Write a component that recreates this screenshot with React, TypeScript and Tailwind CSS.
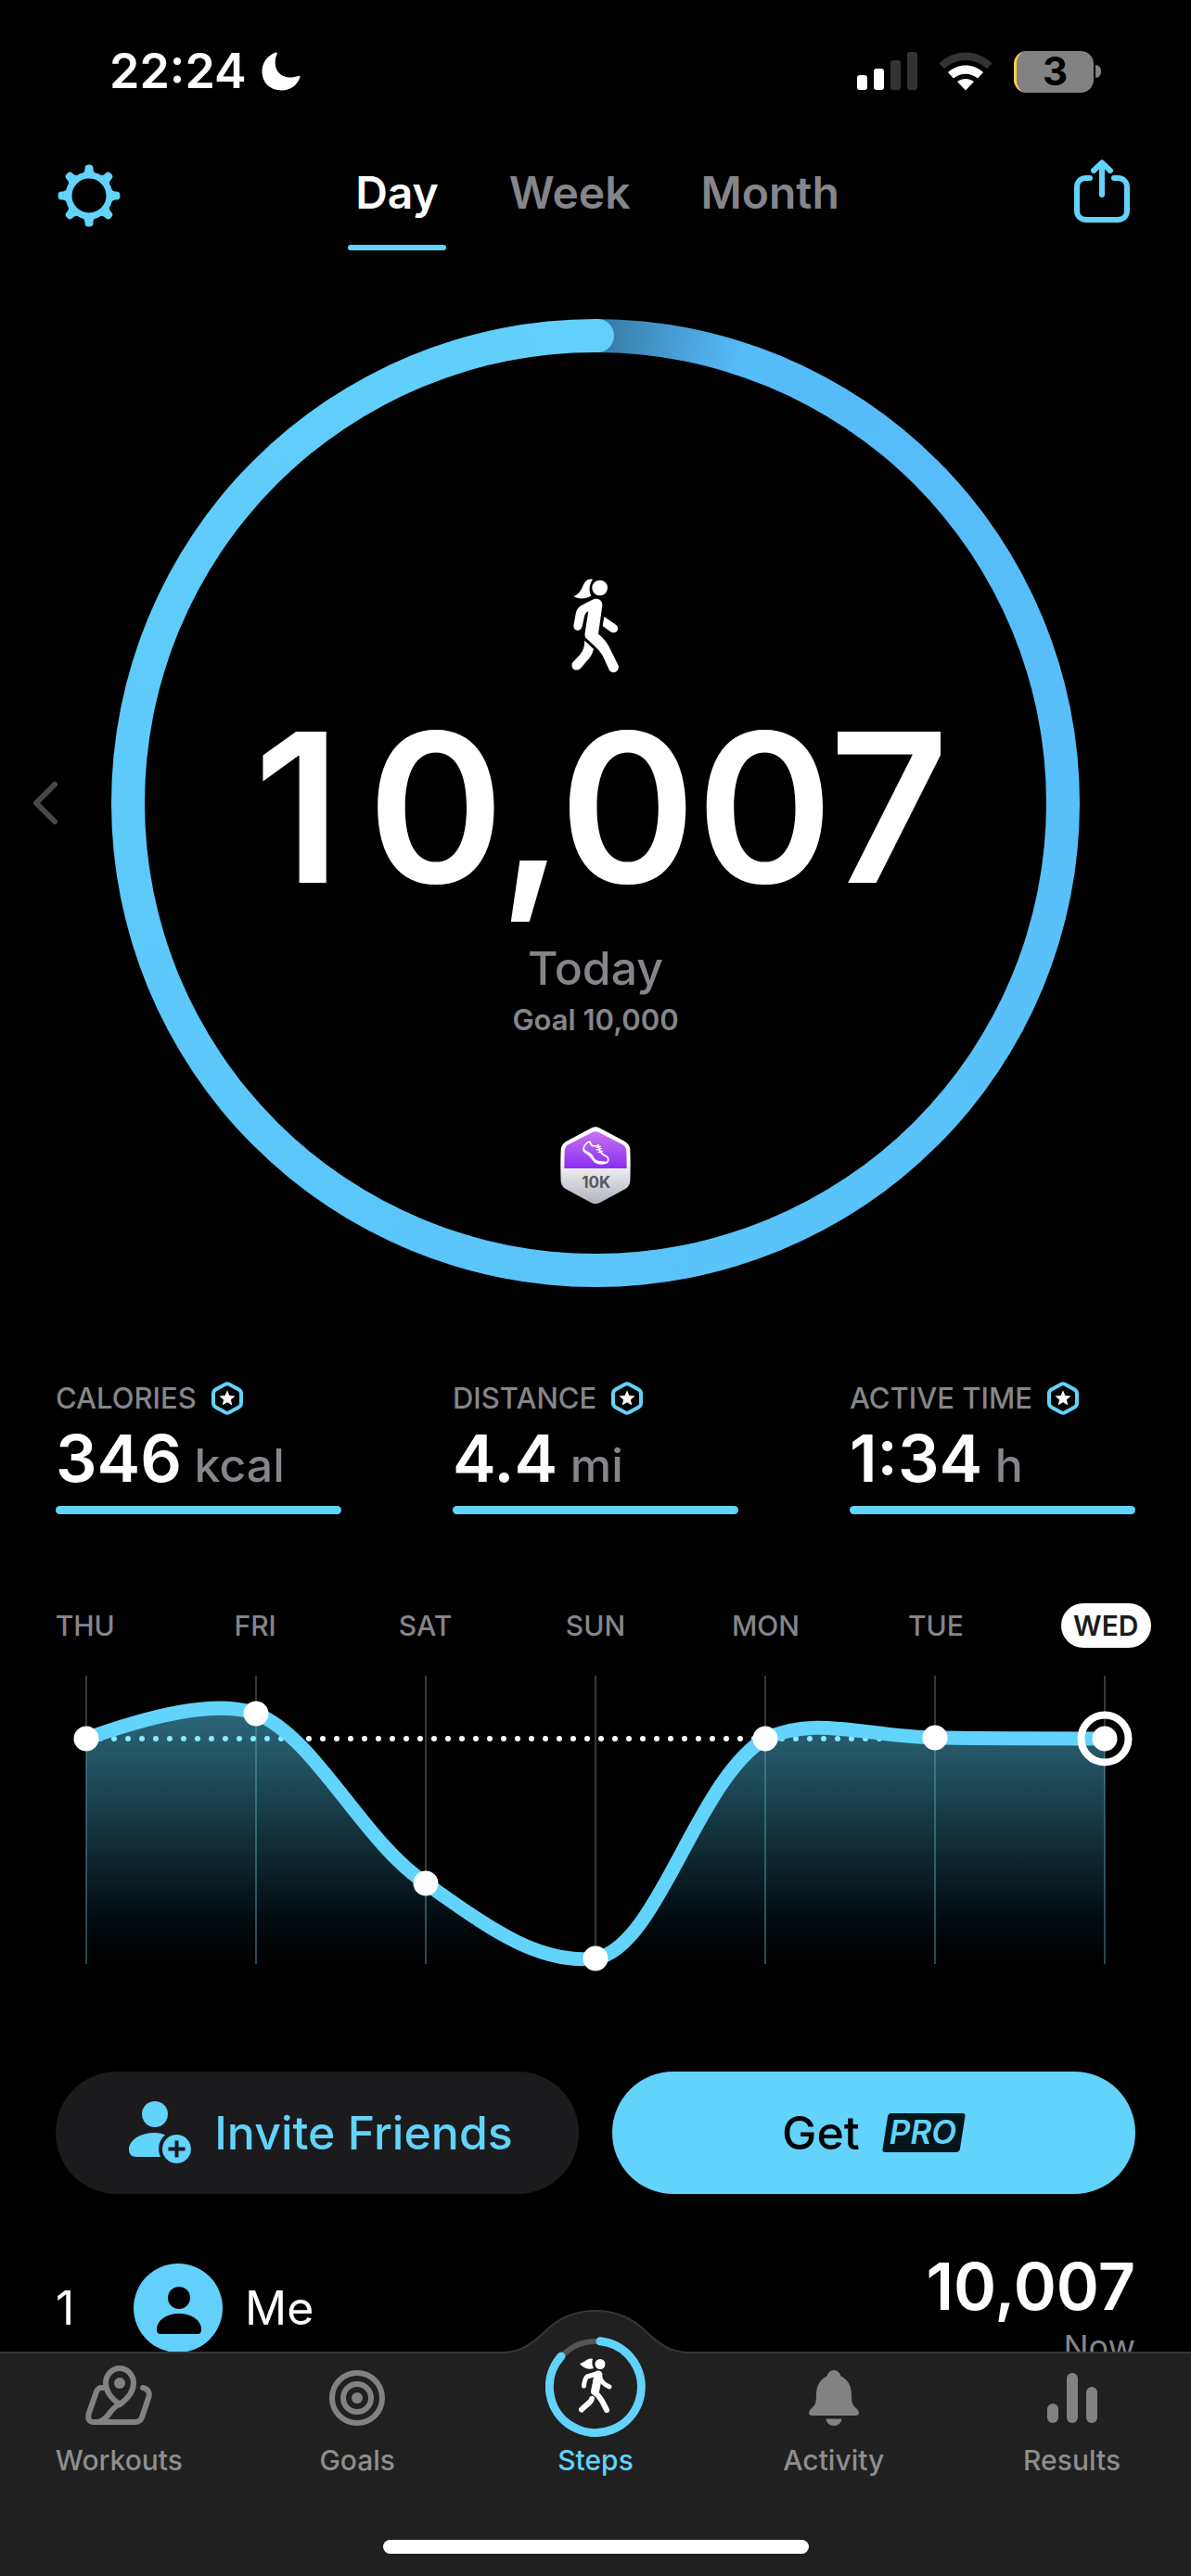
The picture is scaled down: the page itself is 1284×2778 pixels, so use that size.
import { useState } from 'react';
import type { ReactNode } from 'react';

const PERIODS = ['Day', 'Week', 'Month'];

const STATS = [
  { label: 'CALORIES', value: '346', unit: 'kcal' },
  { label: 'DISTANCE', value: '4.4', unit: 'mi' },
  { label: 'ACTIVE TIME', value: '1:34', unit: 'h' },
];

// x / y are chart coordinates, the goal line sits at y = 98
const DAYS = [
  { name: 'THU', x: 93, y: 98 },
  { name: 'FRI', x: 276, y: 71 },
  { name: 'SAT', x: 459, y: 254 },
  { name: 'SUN', x: 642, y: 335 },
  { name: 'MON', x: 825, y: 98 },
  { name: 'TUE', x: 1008, y: 97 },
  { name: 'WED', x: 1191, y: 98 },
];

const CURVE =
  'M93 98C160 74 232 55 276 71C340 96 390 208 459 254C522 298 578 342 642 335C710 323 750 143 825 98C880 73 930 95 1008 97C1070 98 1130 98 1191 98';

function StatusBar() {
  return (
    <div className="flex h-[154px] items-center justify-between pl-[118px] pr-[97px]">
      <div className="flex items-center gap-4">
        <span className="text-[52px] font-semibold leading-[60px]">22:24</span>
        <svg className="h-[42px] w-[42px]" viewBox="0 0 42 42" fill="#fff" aria-hidden="true">
          <path d="M15.500 0.500C16.500 0.200 17.200 1 16.700 2.200C15.300 5.200 14.700 8 14.700 11.500C14.700 21 21 27.500 31 27.500C34 27.500 37 26.900 39.500 26C41 25.500 41.800 26.300 41.400 27.500C38.500 36 31 41.500 21.500 41.500C9 41.500 0.500 33 0.500 20.800C0.500 11.500 6.500 3.500 15.500 0.500Z" />
        </svg>
      </div>
      <div className="flex items-center gap-[23px]">
        <svg className="h-[42px] w-[65px]" viewBox="0 0 65 42" aria-hidden="true">
          <rect x="0" y="25" width="11" height="16" rx="3" fill="#fff" />
          <rect x="18" y="18" width="11" height="23" rx="3" fill="#fff" />
          <rect x="36" y="9" width="11" height="32" rx="3" fill="#333" />
          <rect x="54" y="0" width="11" height="41" rx="3" fill="#333" />
        </svg>
        <svg className="h-[42px] w-[58px]" viewBox="0 0 58 42" aria-hidden="true">
          <path d="M0.500 12.500C16 -3.500 42 -3.500 57.500 12.500L52 18C39 6 19 6 6 18Z" fill="#333" />
          <path d="M10 22C20.500 12 37.500 12 48 22L42 28.500C34.500 22 23.500 22 16 28.500Z" fill="#fff" />
          <path d="M20 32C25.500 28 32.500 28 38 32L29 41.500Z" fill="#fff" />
        </svg>
        <div className="flex items-center gap-[2px]">
          <div className="flex h-[45px] w-[86px] items-center justify-center rounded-[14px] border-l-[3px] border-[#f5d04c] bg-[#828282] text-[42px] font-bold leading-[44px] text-black">
            3
          </div>
          <div className="h-[14px] w-[6px] rounded-r-full bg-[#828282]" />
        </div>
      </div>
    </div>
  );
}

function GearIcon() {
  return (
    <svg className="h-[68px] w-[68px]" viewBox="-34 -34 68 68" aria-hidden="true">
      <circle r="22" fill="none" stroke="#62d3fb" strokeWidth="7" />
      {[0, 45, 90, 135, 180, 225, 270, 315].map((a) => (
        <path
          key={a}
          transform={`rotate(${a})`}
          d="M-10 -22C-6 -24 -4.500 -26 -4.500 -29.500C-4.500 -32.500 -3 -33.500 0 -33.500C3 -33.500 4.500 -32.500 4.500 -29.500C4.500 -26 6 -24 10 -22Z"
          fill="#62d3fb"
        />
      ))}
    </svg>
  );
}

function ShareIcon() {
  return (
    <svg className="h-[68px] w-[60px]" viewBox="0 0 60 68" fill="none" stroke="#62d3fb" strokeWidth="6" strokeLinecap="round" strokeLinejoin="round" aria-hidden="true">
      <path d="M17 20H13C7 20 3 24 3 30V55C3 61 7 65 13 65H47C53 65 57 61 57 55V30C57 24 53 20 47 20H43" />
      <path d="M30 38V4M21 12L30 3.500L39 12" />
    </svg>
  );
}

function WalkIcon() {
  return (
    <svg className="h-[105px] w-[54px]" viewBox="341 125 162 315" fill="#fff" aria-hidden="true">
      <circle cx="436" cy="161" r="25" />
      <path d="M413 133C395 130 387 140 380 158C372 176 360 187 350 188C365 197 390 200 408 186C400 172 401 150 413 133Z" />
      <path d="M424 196C436 196 445 205 444 218L431 310C452 326 466 348 476 372L495 410C503 428 481 444 467 428L446 382C438 364 415 346 391 323C387 318 387 312 388 306L399 237C391 239 387 246 386 255L379 285C376 303 352 304 351 285L358 245C361 230 368 222 380 216L412 199C416 197 420 196 424 196Z" />
      <path d="M450 254L488 280C502 291 491 312 473 304L445 284Z" />
      <path d="M387 331L416 359C412 375 405 385 398 393L374 421C360 434 342 423 346 406C350 398 370 382 380 365C385 355 386 345 387 331Z" />
    </svg>
  );
}

function TenKBadge() {
  return (
    <svg className="h-[84px] w-[76px]" viewBox="192 105 228 252" role="img" aria-label="10K badge">
      <defs>
        <linearGradient id="shell" x1="0" y1="0" x2="0" y2="1">
          <stop offset="0.4" stopColor="#fff" />
          <stop offset="0.6" stopColor="#e4e4ea" />
          <stop offset="1" stopColor="#b2b2bd" />
        </linearGradient>
        <linearGradient id="purple" x1="0" y1="0" x2="0" y2="1">
          <stop offset="0" stopColor="#c774f2" />
          <stop offset="1" stopColor="#8b2df0" />
        </linearGradient>
      </defs>
      <path d="M294 109Q306 103 318 109L400 152Q416 161 418 178Q420 230 418 282Q416 298 402 307L320 351Q306 359 292 351L210 307Q196 298 194 282Q192 230 194 178Q196 161 212 152Z" fill="url(#shell)" />
      <path d="M296 123Q306 118 316 123L392 162Q405 169 406 184L407 240H205L206 184Q207 169 220 162Z" fill="url(#purple)" />
      <path d="M268 172C265 180 269 187 278 191C292 198 296 213 306 220C316 227 340 226 345 219C350 208 347 203 336 199C328 195 322 187 318 179L316 165C306 169 296 168 292 164L288 154C280 153 275 157 268 172Z" fill="none" stroke="#fff" strokeWidth="5" strokeLinejoin="round" />
      <path d="M268 174C276 188 292 186 299 202C306 218 318 216 345 219C340 227 312 228 302 218C294 208 292 198 278 191C269 187 266 181 268 174Z" fill="#fff" />
      <path d="M309 172L322 169M311 180L325 176M316 188L328 184" stroke="#fff" strokeWidth="4" strokeLinecap="round" />
      <text x="308" y="304" textAnchor="middle" fontSize="51" fontWeight="700" fill="#55585c">
        10K
      </text>
    </svg>
  );
}

function StarIcon() {
  return (
    <svg className="h-[36px] w-[34px]" viewBox="0 0 34 36" aria-hidden="true">
      <path d="M15 2.800Q17 1.800 19 2.800L29.500 8.500Q32 10 32 13V23Q32 26 29.500 27.500L19 33.200Q17 34.200 15 33.200L4.500 27.500Q2 26 2 23V13Q2 10 4.500 8.500Z" fill="none" stroke="#62d3fb" strokeWidth="4" />
      <path d="M17 9.200L19.400 14.900L25.600 15.400L20.900 19.500L22.300 25.600L17 22.300L11.700 25.600L13.100 19.500L8.400 15.400L14.600 14.900Z" fill="#fff" />
    </svg>
  );
}

function StepRing() {
  return (
    <section className="mt-[74px] flex items-center">
      <div className="flex w-[120px] shrink-0 pl-[34px]">
        <button type="button" aria-label="Previous day">
          <svg className="h-[50px] w-[30px]" viewBox="0 0 30 50" fill="none" stroke="#48484c" strokeWidth="6" strokeLinecap="round" strokeLinejoin="round">
            <path d="M25 5L5 25L25 45" />
          </svg>
        </button>
      </div>
      <div className="relative aspect-square flex-1 rounded-full bg-[conic-gradient(#3a7da8_0deg,#3a7fab_2deg,#489fd6_10deg,#56bbf9_18deg,#58bffa_90deg,#5dcafa_270deg,#62d0fb_359deg)] p-9">
        {/* round cap at the end of the progress arc */}
        <div className="absolute left-1/2 top-0 h-9 w-5 rounded-r-full bg-[#62d0fb]" />
        <div className="flex h-full flex-col items-center rounded-full bg-black pt-[242px]">
          <WalkIcon />
          <p className="mt-[34px] text-[224px] font-semibold leading-[220px]">
            <span className="inline-block w-[135px] pr-4 text-center">1</span>0,007
          </p>
          <p className="mt-[33px] text-[50px] font-medium leading-[60px] text-[#85858b]">Today</p>
          <p className="mt-2 text-[31px] font-semibold leading-[36px] text-[#85858b]">Goal 10,000</p>
          <div className="mt-[97px]">
            <TenKBadge />
          </div>
        </div>
      </div>
      <div className="w-[120px] shrink-0" />
    </section>
  );
}

function WeekChart() {
  const area = `${CURVE}V341H93Z`;
  return (
    <section className="mt-24">
      <div className="grid grid-cols-7 justify-items-center">
        {DAYS.map((d) =>
          d.name === 'WED' ? (
            <button key={d.name} type="button" className="h-12 rounded-full bg-white px-[13px] text-[30px] font-semibold leading-[48px] text-[#1b1b1d]">
              {d.name}
            </button>
          ) : (
            <button key={d.name} type="button" className="h-12 text-[30px] font-medium leading-[48px] text-[#85858b]">
              {d.name}
            </button>
          )
        )}
      </div>
      <svg className="block h-auto w-full" viewBox="0 0 1284 350" role="img" aria-label="Steps this week">
        <defs>
          <linearGradient id="fill" gradientUnits="userSpaceOnUse" x1="0" y1="71" x2="0" y2="341">
            <stop offset="0" stopColor="#2c667a" />
            <stop offset="0.3" stopColor="#1d4654" />
            <stop offset="0.6" stopColor="#0c242b" />
            <stop offset="0.82" stopColor="#020c10" />
            <stop offset="1" stopColor="#000" />
          </linearGradient>
          <clipPath id="under">
            <path d={area} />
          </clipPath>
        </defs>
        {DAYS.map((d) => (
          <path key={d.name} d={`M${d.x} 30V341`} stroke="#38383a" strokeWidth="2" />
        ))}
        <path d="M93 98H1191" stroke="#fff" strokeWidth="6" strokeLinecap="round" strokeDasharray="0 15" />
        <path d={area} fill="url(#fill)" />
        <g clipPath="url(#under)">
          {DAYS.map((d) => (
            <path key={d.name} d={`M${d.x} 30V341`} stroke="#5aa7b4" strokeOpacity="0.45" strokeWidth="2" />
          ))}
          <path d="M93 98H1191" stroke="#86ecfe" strokeWidth="6" strokeLinecap="round" strokeDasharray="0 15" />
        </g>
        <path d={CURVE} fill="none" stroke="#62d3fb" strokeWidth="15" />
        {DAYS.map((d) => (
          <circle key={d.name} cx={d.x} cy={d.y} r="13.500" fill="#fff" />
        ))}
        <circle cx="1191" cy="98" r="25.500" fill="none" stroke="#fff" strokeWidth="8" />
      </svg>
    </section>
  );
}

function Actions() {
  return (
    <section className="mt-[107px] grid grid-cols-2 gap-9 px-[60px]">
      <button type="button" className="flex h-[132px] items-center justify-center gap-6 rounded-full bg-[#1b1b1d] pl-2 text-[50px] font-medium text-[#62d3fb]">
        <svg className="h-[68px] w-[68px]" viewBox="0 0 68 68" fill="#62d3fb" aria-hidden="true">
          <circle cx="28" cy="14" r="14" />
          <path d="M28 34C33 34 36 35 39 36.500C31 43 31 53 34 60H8C3 60 0 57 0 52C0 42 12 34 28 34Z" />
          <path fillRule="evenodd" d="M51.500 36A15.500 15.500 0 1 1 51.400 36ZM49.500 42.500V49.500H42.500V53.500H49.500V60.500H53.500V53.500H60.500V49.500H53.500V42.500Z" />
        </svg>
        Invite Friends
      </button>
      <button type="button" className="flex h-[132px] items-center justify-center gap-6 rounded-full bg-[#62d3fb] text-[50px] font-medium text-black">
        Get
        <svg className="h-[42px] w-[90px]" viewBox="0 0 90 42" role="img" aria-label="PRO">
          <path d="M10 0H87Q90 0 89.500 3L84 38Q83.500 42 79 42H3Q0 42 0.500 39L6 4Q6.500 0 10 0Z" fill="#04161b" />
          <text x="44" y="33" textAnchor="middle" fontSize="35" fontWeight="600" fontStyle="italic" fill="#62d3fb">
            PRO
          </text>
        </svg>
      </button>
    </section>
  );
}

function Leaderboard() {
  return (
    <section className="mt-[65px] flex items-start justify-between px-[60px]">
      <div className="flex items-center pt-[10px] text-[50px]">
        <span className="w-[84px]">1</span>
        <svg className="h-24 w-24" viewBox="0 0 96 96" aria-hidden="true">
          <circle cx="48" cy="48" r="48" fill="#62d0fb" />
          <circle cx="49" cy="37" r="12" />
          <path d="M49 54C62 54 73 61 73 71C73 74 72 76 69 76H29C26 76 25 74 25 71C25 61 36 54 49 54Z" />
        </svg>
        <span className="ml-6">Me</span>
      </div>
      <div className="text-right">
        <p className="text-[70px] font-semibold leading-[70px]">10,007</p>
        <p className="mt-2 text-[36px] leading-[44px] text-[#85858b]">Now</p>
      </div>
    </section>
  );
}

function Tab({ label, active, children }: { label: string; active?: boolean; children: ReactNode }) {
  return (
    <a href={`#${label.toLowerCase()}`} className="flex flex-1 flex-col items-center gap-[11px]">
      <span className="flex h-[86px] items-end justify-center">{children}</span>
      <span className={active ? 'text-[30px] font-medium leading-[36px] text-[#62d3fb]' : 'text-[30px] font-medium leading-[36px] text-[#8e8e8e]'}>
        {label}
      </span>
    </a>
  );
}

function TabBar() {
  return (
    <nav className="relative h-[242px] shrink-0 border-t-2 border-[#363636] bg-[#202020]">
      {/* raised part behind the Steps tab */}
      <svg className="absolute -top-[47px] left-1/2 h-[50px] w-[200px] -translate-x-1/2" viewBox="0 0 200 50" aria-hidden="true">
        <path d="M0 50V46C20 46 32 36 46 23C60 9 78 1 100 1C122 1 140 9 154 23C168 36 180 46 200 46V50Z" fill="#202020" />
        <path d="M0 46C20 46 32 36 46 23C60 9 78 1 100 1C122 1 140 9 154 23C168 36 180 46 200 46" fill="none" stroke="#363636" strokeWidth="2" />
      </svg>
      <div className="relative flex">
        <Tab label="Workouts">
          <svg className="mb-2 h-[66px] w-[72px]" viewBox="0 0 72 66" fill="none" stroke="#828282" strokeWidth="6" strokeLinecap="round" strokeLinejoin="round" aria-hidden="true">
            <path d="M20 25H17C14 25 13 27 12 29L4 52C2 58 4 62 9 62H53C57 62 60 60 61 57L68 36C70 31 68 26 62 25" />
            <path d="M37 43C30 38 22 31 22 20C22 11 29 4 37 4C45 4 52 11 52 20C52 31 44 38 37 43Z" />
            <path d="M37 43C26 47 26 59 14 62" />
            <circle cx="37" cy="20" r="6" fill="#828282" stroke="none" />
          </svg>
        </Tab>
        <Tab label="Goals">
          <svg className="mb-2 h-[60px] w-[60px]" viewBox="0 0 60 60" fill="none" stroke="#828282" strokeWidth="6" aria-hidden="true">
            <circle cx="30" cy="30" r="27" />
            <circle cx="30" cy="30" r="15" />
            <circle cx="30" cy="30" r="6" fill="#828282" stroke="none" />
          </svg>
        </Tab>
        <Tab label="Steps" active>
          <svg className="-mb-1 h-[108px] w-[108px]" viewBox="0 0 108 108" fill="none" aria-hidden="true">
            <circle cx="54" cy="54" r="49" stroke="#555557" strokeWidth="6" />
            <path d="M59 4.800A49.500 49.500 0 1 1 17 21" stroke="#62d3fb" strokeWidth="9" strokeLinecap="round" />
            <circle cx="59" cy="29.500" r="5.500" fill="#fff" />
            <path d="M51 24C46 22 42 28 37 29C41 34 47 36 52 34C50 31 50 27 51 24Z" fill="#fff" />
            <g stroke="#fff" strokeLinecap="round" strokeLinejoin="round">
              <path d="M55 40L45 43C42.500 45 42 48 41.500 53" strokeWidth="5" />
              <path d="M57 41L53.500 59" strokeWidth="9" />
              <path d="M58 41C60 49 63 51 69 54" strokeWidth="5" />
              <path d="M54 61C60 65 62 71 66 79" strokeWidth="6" />
              <path d="M50 67C49 71 43 74 39 78.500" strokeWidth="6" />
            </g>
          </svg>
        </Tab>
        <Tab label="Activity">
          <svg className="mb-2 h-[60px] w-[54px]" viewBox="0 0 54 60" fill="#828282" aria-hidden="true">
            <path d="M27 0C31 0 33.500 3 34.500 6.500C42 10 46 17 46 27C46 37 48 38 51.500 41.500C53.500 43.500 54 45 54 46C54 48 52.500 49 50.500 49H3.500C1.500 49 0 48 0 46C0 45 0.500 43.500 2.500 41.500C6 38 8 37 8 27C8 17 12 10 19.500 6.500C20.500 3 23 0 27 0Z" />
            <path d="M18.500 52.500H35.500C35 57 31.500 60 27 60C22.500 60 19 57 18.500 52.500Z" />
          </svg>
        </Tab>
        <Tab label="Results">
          <svg className="mb-[11px] h-[54px] w-[54px]" viewBox="0 0 54 54" fill="#828282" aria-hidden="true">
            <rect x="0" y="33" width="12" height="21" rx="6" />
            <rect x="21" y="0" width="12" height="54" rx="6" />
            <rect x="42" y="15" width="12" height="39" rx="6" />
          </svg>
        </Tab>
      </div>
      <div className="mx-auto mt-[68px] h-[15px] w-[459px] rounded-full bg-white" />
    </nav>
  );
}

export default function App() {
  const [period, setPeriod] = useState('Day');

  return (
    <div className="flex h-screen flex-col bg-black font-['Inter','Liberation_Sans',sans-serif] text-white">
      <main className="min-h-0 flex-1 overflow-hidden">
        <StatusBar />

        <header className="flex items-start justify-between pl-[62px] pr-[66px]">
          <button type="button" aria-label="Settings" className="mt-[23px]">
            <GearIcon />
          </button>
          <div className="flex gap-[60px] pt-6">
            {PERIODS.map((p) => (
              <button
                key={p}
                type="button"
                onClick={() => setPeriod(p)}
                className={
                  p === period
                    ? 'flex flex-col gap-[26px] text-[48px] font-semibold leading-[60px] text-white'
                    : 'flex flex-col gap-[26px] text-[48px] font-semibold leading-[60px] text-[#85858b]'
                }
              >
                <span className="px-2">{p}</span>
                {p === period && <span className="h-[6px] w-full rounded-full bg-[#62d3fb]" />}
              </button>
            ))}
          </div>
          <button type="button" aria-label="Share" className="mt-[18px]">
            <ShareIcon />
          </button>
        </header>

        <StepRing />

        <section className="mt-[102px] grid grid-cols-3 gap-[120px] px-[60px]">
          {STATS.map((s) => (
            <div key={s.label}>
              <div className="flex items-center gap-4">
                <span className="whitespace-nowrap text-[31px] font-medium leading-[36px] text-[#85858b]">{s.label}</span>
                <StarIcon />
              </div>
              <p className="mt-3 text-[70px] font-semibold leading-[70px]">
                {s.value} <span className="-ml-1 text-[50px] font-medium leading-none text-[#85858b]">{s.unit}</span>
              </p>
              <div className="mt-4 h-[9px] rounded-full bg-[#62d3fb]" />
            </div>
          ))}
        </section>

        <WeekChart />
        <Actions />
        <Leaderboard />
      </main>
      <TabBar />
    </div>
  );
}
